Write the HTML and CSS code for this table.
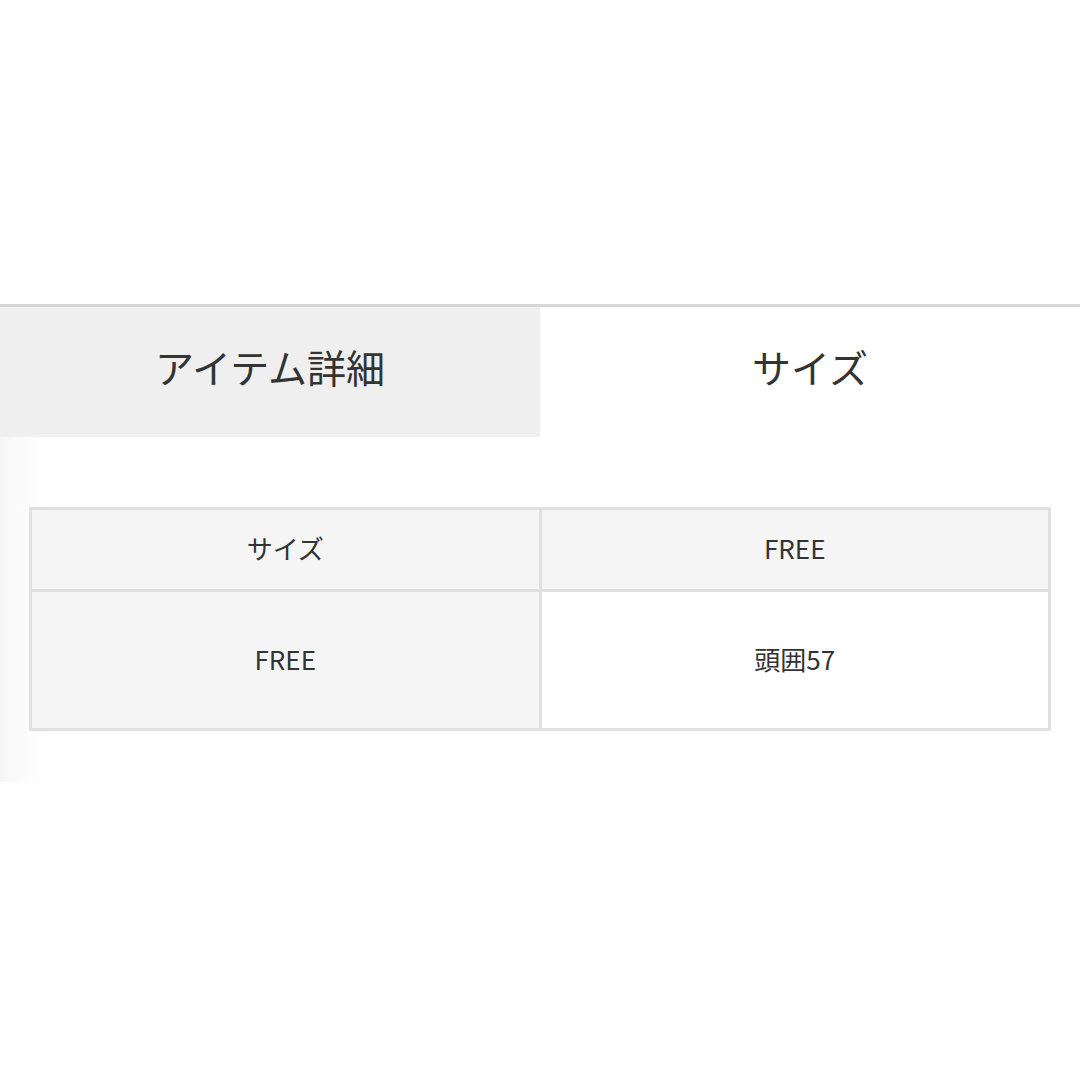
FILE: index.html
```html
<!DOCTYPE html>
<html lang="ja">
<head>
<meta charset="utf-8">
<link rel="stylesheet" href="styles.css">
</head>
<body>
<div class="spacer"></div>
<div class="tabs">
  <div class="tab tab-inactive">アイテム詳細</div>
  <div class="tab tab-active">サイズ</div>
</div>
<div class="panel">
  <table class="size-table">
    <tr class="row-head">
      <td class="cell cell-grey">サイズ</td>
      <td class="cell cell-grey">FREE</td>
    </tr>
    <tr class="row-body">
      <td class="cell cell-grey">FREE</td>
      <td class="cell cell-white">頭囲57</td>
    </tr>
  </table>
</div>
</body>
</html>
```
FILE: styles.css
```css
html, body {
  margin: 0;
  padding: 0;
  background: #ffffff;
}
body {
  font-family: "Noto Sans CJK JP", "Noto Sans", sans-serif;
  color: #333333;
}
.spacer {
  height: 304px;
}
.tabs {
  display: flex;
  border-top: 3px solid #d6d6d6;
}
.tab {
  flex: 1 1 0;
  height: 130px;
  box-sizing: border-box;
  padding-bottom: 12px;
  display: flex;
  align-items: center;
  justify-content: center;
  font-size: 39px;
  color: #333333;
}
.tab-inactive {
  background: #efefef;
}
.tab-active {
  background: #ffffff;
}
.panel {
  padding: 70px 29px 51px 29px;
  background: linear-gradient(to right, #f6f6f6 0px, #fafafa 15px, #ffffff 45px);
}
.size-table {
  width: 100%;
  border-collapse: collapse;
  table-layout: fixed;
  border: 3px solid #e0e0e0;
}
.cell {
  border: 3px solid #e0e0e0;
  text-align: center;
  font-size: 26px;
  color: #333333;
  padding: 0 0 4px 0;
}
.row-head .cell {
  height: 75px;
}
.row-body .cell {
  height: 132px;
}
.cell-grey {
  background: #f5f5f5;
}
.cell-white {
  background: #ffffff;
}
```
